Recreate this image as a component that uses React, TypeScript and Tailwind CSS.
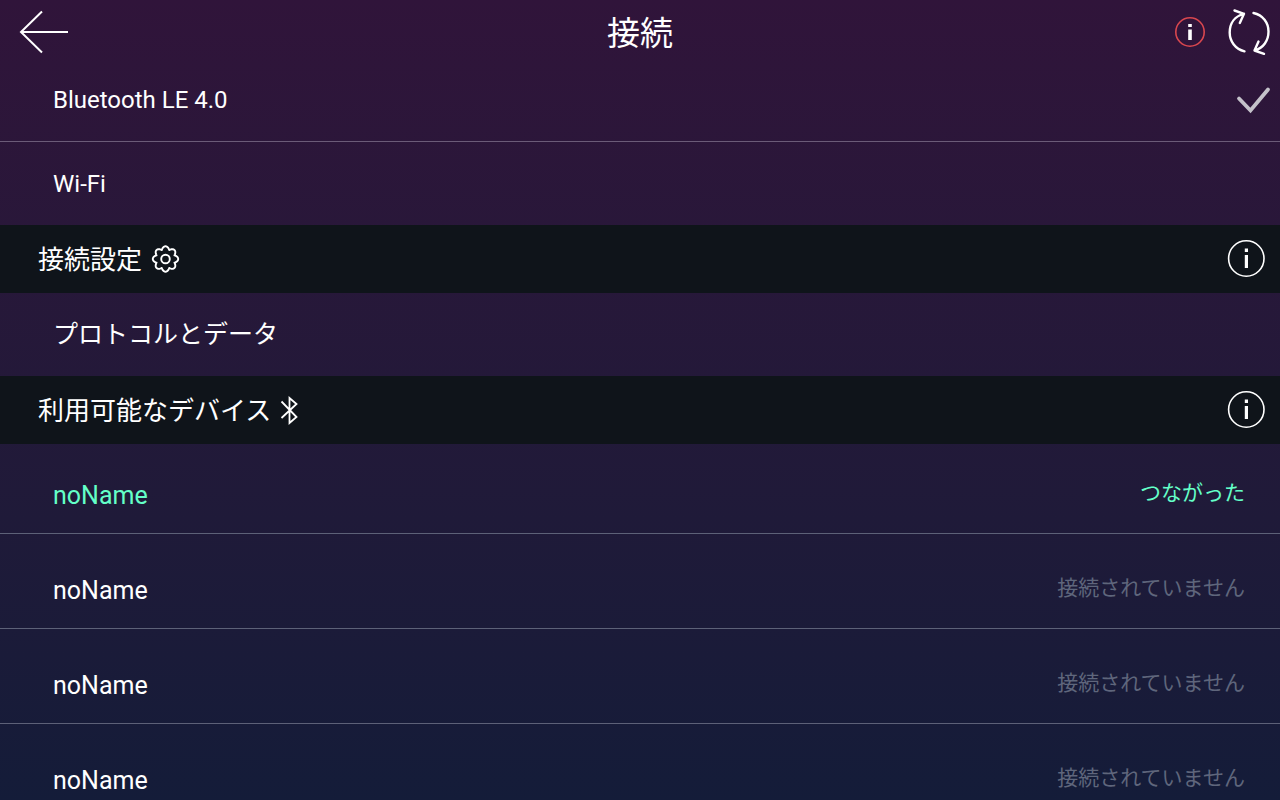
import { useState } from "react";

type Transport = "ble" | "wifi";

const transports: { id: Transport; label: string }[] = [
  { id: "ble", label: "Bluetooth LE 4.0" },
  { id: "wifi", label: "Wi-Fi" },
];

const devices = [
  { id: 1, name: "noName", connected: true },
  { id: 2, name: "noName", connected: false },
  { id: 3, name: "noName", connected: false },
  { id: 4, name: "noName", connected: false },
];

export default function App() {
  const [transport, setTransport] = useState<Transport>("ble");

  return (
    <div className="flex h-screen flex-col overflow-hidden bg-linear-to-b from-[#30143a] via-[#231939] to-[#141c39] font-[Roboto,'Noto_Sans_CJK_JP',sans-serif] text-[25px] leading-9 text-white">
      <header className="grid h-[59px] shrink-0 grid-cols-[1fr_auto_1fr] items-center px-2 pt-1">
        <button type="button" aria-label="戻る" className="justify-self-start pl-2">
          <BackIcon />
        </button>
        <h1 className="pt-1 text-[33px]">接続</h1>
        <div className="flex items-center gap-5 justify-self-end">
          <button type="button" aria-label="情報">
            <AlertInfoIcon />
          </button>
          <button type="button" aria-label="更新">
            <RefreshIcon />
          </button>
        </div>
      </header>

      <main className="shrink-0">
        <div role="radiogroup" aria-label="接続" className="divide-y divide-[#6b5b78]">
          {transports.map((t) => (
            <label
              key={t.id}
              className="flex h-[83px] cursor-pointer items-center justify-between pr-2 pl-[53px] text-2xl"
            >
              <input
                type="radio"
                name="transport"
                className="absolute appearance-none"
                checked={transport === t.id}
                onChange={() => setTransport(t.id)}
              />
              {t.label}
              {transport === t.id && <CheckIcon />}
            </label>
          ))}
        </div>

        <SectionHeader title="接続設定" icon={<GearIcon />} />
        <button type="button" className="flex h-[83px] w-full items-center pl-[53px] text-left">
          プロトコルとデータ
        </button>

        <SectionHeader title="利用可能なデバイス" icon={<BluetoothIcon />} />
        <ul className="divide-y divide-[#5d6178]">
          {devices.map((d) => (
            <li key={d.id} className="h-[95px] first:h-[90px] last:h-[94px]">
              <button
                type="button"
                className={`flex h-full w-full items-end justify-between pr-[35px] pb-[19px] pl-[53px] ${
                  d.connected ? "text-[#64ffc8]" : "text-white"
                }`}
              >
                <span>{d.name}</span>
                <span className={`pb-[3px] text-[21px] ${d.connected ? "" : "text-[#5f667c]"}`}>
                  {d.connected ? "つながった" : "接続されていません"}
                </span>
              </button>
            </li>
          ))}
        </ul>
      </main>
    </div>
  );
}

function SectionHeader({ title, icon }: { title: string; icon: React.ReactNode }) {
  return (
    <div className="flex h-[68px] items-center justify-between bg-[#0f141a] pr-[15px] pl-[38px]">
      <h2 className="flex items-center gap-2 pt-0.5 text-[26px]">
        {title}
        {icon}
      </h2>
      <button type="button" aria-label={`${title}の情報`}>
        <InfoIcon />
      </button>
    </div>
  );
}

function BackIcon() {
  return (
    <svg width="54" height="44" viewBox="0 0 54 44" fill="none" stroke="currentColor" strokeWidth="2">
      <path d="M26 1.500 5 22 26 42.500M5 22H52" />
    </svg>
  );
}

function AlertInfoIcon() {
  return (
    <svg width="34" height="32" viewBox="-1 0 34 32" fill="none">
      <circle cx="15" cy="16" r="14.200" stroke="#d9474f" strokeWidth="1.600" />
      <path d="M13.200 8h3.600v3h-3.600zM13.200 13.500h3.600V24h-3.600z" fill="currentColor" />
    </svg>
  );
}

function InfoIcon() {
  return (
    <svg width="38" height="38" viewBox="0 0 38 38" fill="none">
      <circle cx="19.300" cy="18.500" r="17.700" stroke="currentColor" strokeWidth="1.600" />
      <path d="M17.800 8.500h3.200V12h-3.200zM17.800 15h3.200v13h-3.200z" fill="currentColor" />
    </svg>
  );
}

function RefreshIcon() {
  return (
    <svg width="44" height="48" viewBox="1 0 44 48" fill="none" stroke="currentColor" strokeWidth="2.400" strokeLinecap="round" strokeLinejoin="round">
      <path d="M17.500 43.300C8 41 2.700 33 2.700 24.500 2.700 15 8 8 17 5.800M7.500 2.500 17 5.800 12.800 15" />
      <path d="M26.500 5C36 7 41.500 15 41.500 23.500 41.500 32.500 36.500 40 27.500 42.500M37 45.800 27.500 42.500 31.500 33.500" />
    </svg>
  );
}

function CheckIcon() {
  return (
    <svg width="36" height="30" viewBox="0 0 36 30" fill="none" stroke="#c4c2ca" strokeWidth="3.800" strokeLinecap="round" strokeLinejoin="miter">
      <path d="M3 13.500 14.500 25.500 32 4.500" />
    </svg>
  );
}

// Outline of an eight-lobed gear centred on (15, 15).
const gearPoints = Array.from({ length: 96 }, (_, i) => {
  const angle = (i / 96) * Math.PI * 2;
  const radius = 9.7 + 3 * Math.abs(Math.cos(angle * 4));
  return `${(15 + radius * Math.cos(angle)).toFixed(2)},${(15 + radius * Math.sin(angle)).toFixed(2)}`;
}).join(" ");

function GearIcon() {
  return (
    <svg width="30" height="30" viewBox="-0.5 1 30 30" fill="none" stroke="currentColor" strokeWidth="1.900" strokeLinejoin="round">
      <polygon points={gearPoints} />
      <circle cx="15" cy="15" r="4.300" />
    </svg>
  );
}

function BluetoothIcon() {
  return (
    <svg width="22" height="30" viewBox="0.5 0.5 22 30" fill="none" stroke="currentColor" strokeWidth="1.800">
      <path d="M3 6 18 21.500 11 27.500V2.500L18 8.500 3 22.500" />
    </svg>
  );
}
